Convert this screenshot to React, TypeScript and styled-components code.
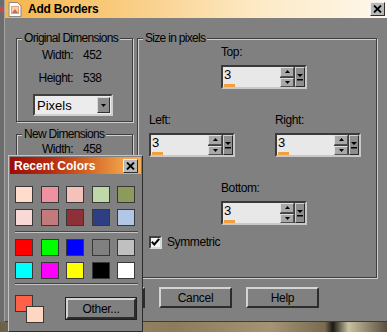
import React from "react";
import styled, { createGlobalStyle } from "styled-components";

const GlobalStyle = createGlobalStyle`
  html, body {
    margin: 0;
    padding: 0;
    overflow: hidden;
    background: #5e5e5e;
  }
  body {
    font-family: "Liberation Sans", Arial, sans-serif;
    font-size: 12px;
    color: #000;
  }
`;

const Screen = styled.div`
  position: relative;
  width: 387px;
  height: 332px;
  display: flex;
  flex-direction: column;
  overflow: hidden;
`;

const Main = styled.div`
  display: flex;
  height: 322px;
`;

const EdgeStrip = styled.div`
  width: 4px;
  background: linear-gradient(
    to bottom,
    #6c6c6c 0 7px,
    #d04848 7px 12px,
    #6c6c6c 12px 100%
  );
`;

const PhotoStrip = styled.div`
  flex: 1;
  background: linear-gradient(
    to right,
    #6a604a 0,
    #9a8a68 20%,
    #8c7c5c 45%,
    #a49474 70%,
    #7a6a50 84%,
    #1a1a14 86%,
    #c8c0a0 90%,
    #5a5040 100%
  );
`;

const Dialog = styled.div`
  flex: 1;
  display: flex;
  flex-direction: column;
  background: #808080;
  border-left: 1px solid #a4a4a4;
  border-bottom: 1px solid #3c3c3c;
`;

const TitleBar = styled.div`
  height: 18px;
  display: flex;
  align-items: center;
  padding: 0 2px 0 3px;
  background: linear-gradient(
    to right,
    #f5b54c 0,
    #f9cf88 35%,
    #fde9c4 65%,
    #fff8ec 100%
  );
`;

const TitleText = styled.div`
  flex: 1;
  margin-left: 6px;
  font-weight: bold;
  font-size: 12px;
  letter-spacing: -0.2px;
`;

const CloseButton = styled.div`
  width: 15px;
  height: 14px;
  box-sizing: border-box;
  display: flex;
  align-items: center;
  justify-content: center;
  background: #b8b8b8;
  border: 1px solid;
  border-color: #f0f0f0 #303030 #303030 #f0f0f0;
`;

const Body = styled.div`
  flex: 1;
  display: flex;
  flex-direction: column;
  padding: 13px 10px 0 11px;
`;

const Groups = styled.div`
  display: flex;
  gap: 4px;
  height: 247px;
`;

const LeftColumn = styled.div`
  width: 117px;
  display: flex;
  flex-direction: column;
  gap: 5px;
`;

const Group = styled.fieldset<{ $height?: number; $grow?: boolean }>`
  margin: 0;
  padding: 0;
  min-width: 0;
  box-sizing: border-box;
  ${(p) => (p.$height ? `height: ${p.$height}px;` : "")}
  ${(p) => (p.$grow ? "flex: 1;" : "")}
  border: 1px solid #3e3e3e;
  box-shadow: inset 1px 1px 0 #cfcfcf, 1px 1px 0 #cfcfcf;
  display: flex;
  flex-direction: column;
`;

const Legend = styled.legend`
  margin-left: 5px;
  padding: 0 2px;
  background: #808080;
  line-height: 14px;
  letter-spacing: -0.7px;
`;

const InfoGrid = styled.div<{ $top?: number }>`
  display: grid;
  grid-template-columns: 56px auto;
  column-gap: 10px;
  row-gap: 9px;
  padding-top: ${(p) => p.$top ?? 3}px;
  line-height: 14px;
  letter-spacing: -0.5px;
`;

const InfoLabel = styled.span`
  text-align: right;
`;

const Select = styled.div`
  margin: 9px 0 0 16px;
  width: 80px;
  height: 22px;
  box-sizing: border-box;
  display: flex;
  align-items: center;
  background: #ececec;
  border: 2px solid;
  border-color: #404040 #d0d0d0 #d0d0d0 #404040;
  padding-left: 2px;
  font-size: 13px;
`;

const SelectText = styled.span`
  flex: 1;
`;

const DropButton = styled.div`
  width: 13px;
  height: 16px;
  margin-right: 1px;
  box-sizing: border-box;
  display: flex;
  align-items: center;
  justify-content: center;
  background: #8c8c8c;
  border: 1px solid;
  border-color: #d8d8d8 #303030 #303030 #d8d8d8;
`;

const SizeBody = styled.div`
  display: flex;
  flex-direction: column;
  padding: 0 15px 0 11px;
`;

const SpinRow = styled.div<{ $indent?: number; $top?: number }>`
  display: flex;
  justify-content: space-between;
  padding-left: ${(p) => p.$indent ?? 0}px;
  margin-top: ${(p) => p.$top ?? 0}px;
`;

const Field = styled.div`
  display: flex;
  flex-direction: column;
  gap: 6px;
`;

const FieldLabel = styled.span`
  line-height: 14px;
  font-size: 12px;
  letter-spacing: -0.4px;
`;

const SpinBox = styled.div`
  width: 86px;
  height: 24px;
  box-sizing: border-box;
  display: flex;
  border: 2px solid;
  border-color: #3a3a3a #c8c8c8 #c8c8c8 #3a3a3a;
  background: #3e3e3e;
`;

const SpinField = styled.div`
  flex: 1;
  background: #e8e8e8;
  font-size: 13px;
  line-height: 15px;
  padding-left: 1px;
`;

const Progress = styled.div`
  width: 11px;
  height: 3px;
  margin-top: 2px;
  background: #f0a040;
`;

const SpinArrows = styled.div`
  width: 14px;
  display: flex;
  flex-direction: column;
  gap: 1px;
`;

const ArrowButton = styled.div`
  flex: 1;
  box-sizing: border-box;
  display: flex;
  align-items: center;
  justify-content: center;
  background: #a8a8a8;
  border: 1px solid;
  border-color: #e0e0e0 #505050 #505050 #e0e0e0;
`;

const SpinMenu = styled.div`
  width: 10px;
  margin-left: 1px;
  box-sizing: border-box;
  display: flex;
  align-items: center;
  justify-content: center;
  background: #8e8e8e;
  border: 1px solid;
  border-color: #d0d0d0 #2a2a2a #2a2a2a #d0d0d0;
`;

const CheckRow = styled.label`
  display: flex;
  align-items: center;
  gap: 5px;
  margin-top: 10px;
  letter-spacing: -0.4px;
`;

const CheckBox = styled.div`
  width: 13px;
  height: 13px;
  box-sizing: border-box;
  display: flex;
  align-items: center;
  justify-content: center;
  background: #f4f4f4;
  border: 2px solid;
  border-color: #404040 #d8d8d8 #d8d8d8 #404040;
`;

const ButtonRow = styled.div`
  display: flex;
  gap: 14px;
  margin: 9px 0 0 56px;
`;

const Button = styled.div<{ $default?: boolean; $width?: number }>`
  width: ${(p) => p.$width ?? 73}px;
  height: 21px;
  box-sizing: border-box;
  display: flex;
  align-items: center;
  justify-content: center;
  background: #808080;
  font-size: 12px;
  letter-spacing: -0.3px;
  border: 2px solid;
  border-color: #d4d4d4 #2c2c2c #2c2c2c #d4d4d4;
  ${(p) => (p.$default ? "outline: 1px solid #202020;" : "")}
`;

/* floating Recent Colors palette */
const Popup = styled.div`
  position: absolute;
  left: 8px;
  top: 155px;
  width: 135px;
  height: 177px;
  box-sizing: border-box;
  background: #808080;
  border: 1px solid;
  border-color: #c4c4c4 #2c2c2c #2c2c2c #c4c4c4;
  padding: 1px;
  display: flex;
  flex-direction: column;
`;

const PopupTitle = styled.div`
  height: 17px;
  display: flex;
  align-items: center;
  padding: 0 3px 0 4px;
  background: linear-gradient(
    to right,
    #9c0e06 0,
    #b42a10 30%,
    #d66a26 62%,
    #f2a44c 88%,
    #f4ac56 100%
  );
  color: #fff;
  font-weight: bold;
  font-size: 12px;
`;

const PopupTitleText = styled.span`
  flex: 1;
`;

const PaletteBody = styled.div`
  display: flex;
  flex-direction: column;
  padding: 12px 0 0 5px;
`;

const SwatchGrid = styled.div<{ $top?: number }>`
  display: grid;
  grid-template-columns: repeat(5, 18px);
  column-gap: 7.5px;
  row-gap: 6px;
  margin-top: ${(p) => p.$top ?? 0}px;
`;

const Swatch = styled.div<{ $color: string }>`
  width: 18px;
  height: 17px;
  box-sizing: border-box;
  background: ${(p) => p.$color};
  border: 1px solid #383838;
`;

const Separator = styled.div<{ $top: number }>`
  width: 123px;
  margin-top: ${(p) => p.$top}px;
  border-top: 1px solid #444;
  border-bottom: 1px solid #c4c4c4;
`;

const PaletteFooter = styled.div`
  display: flex;
  align-items: flex-start;
  justify-content: space-between;
  width: 121px;
  margin-top: 10px;
`;

const ColorPair = styled.div`
  display: grid;
  grid-template-columns: 11px 7px 11px;
  grid-template-rows: 11px 6px 11px;
`;

const ColorChip = styled.div<{ $color: string; $back?: boolean }>`
  grid-column: ${(p) => (p.$back ? "2 / 4" : "1 / 3")};
  grid-row: ${(p) => (p.$back ? "2 / 4" : "1 / 3")};
  background: ${(p) => p.$color};
  border: 1px solid #383838;
  box-sizing: border-box;
  z-index: ${(p) => (p.$back ? 1 : 0)};
`;

const OtherWrap = styled.div`
  margin-top: 3px;
`;

const recent = [
  "#ffdccb", "#ee92a2", "#f6c1b8", "#bfd8a8", "#8c9a5c",
  "#f9d9d6", "#c27a7c", "#8e3038", "#2e3e82", "#b2c6e8",
];
const basic = [
  "#ff0000", "#00ff00", "#0000ff", "#808080", "#c0c0c0",
  "#00ffff", "#ff00ff", "#ffff00", "#000000", "#ffffff",
];

const XGlyph = () => (
  <svg width="9" height="8" viewBox="0 0 9 8">
    <path d="M1 0.5 L8 7.5 M8 0.5 L1 7.5" stroke="#000" strokeWidth="1.8" />
  </svg>
);

const Tri = ({ up }: { up?: boolean }) => (
  <svg width="5" height="3" viewBox="0 0 5 3">
    <path d={up ? "M2.5 0 L5 3 L0 3 Z" : "M0 0 L5 0 L2.5 3 Z"} fill="#000" />
  </svg>
);

const MenuGlyph = () => (
  <svg width="6" height="7" viewBox="0 0 6 7">
    <path d="M0 0 L6 0 L3 3 Z" fill="#000" />
    <rect x="0" y="5" width="6" height="1.5" fill="#000" />
  </svg>
);

const DocIcon = () => (
  <svg width="14" height="15" viewBox="0 0 14 15">
    <path d="M1 0.5 H9.5 L13 4 V14.5 H1 Z" fill="#fbfbf8" stroke="#8a8a8a" />
    <rect x="3" y="4" width="8" height="8" fill="#e8a080" />
    <rect x="4" y="5" width="6" height="6" fill="#f4d0b4" />
    <path d="M4 11 L7 7 L10 11 Z" fill="#c07050" />
  </svg>
);

const Spinner = ({ label }: { label: string }) => (
  <Field>
    <FieldLabel>{label}</FieldLabel>
    <SpinBox>
      <SpinField>
        3
        <Progress />
      </SpinField>
      <SpinArrows>
        <ArrowButton>
          <Tri up />
        </ArrowButton>
        <ArrowButton>
          <Tri />
        </ArrowButton>
      </SpinArrows>
      <SpinMenu>
        <MenuGlyph />
      </SpinMenu>
    </SpinBox>
  </Field>
);

const Check = () => (
  <svg width="9" height="8" viewBox="0 0 9 8">
    <path d="M0.8 3.8 L3.3 6.5 L8.2 0.8" stroke="#000" strokeWidth="2" fill="none" />
  </svg>
);

export default function App() {
  return (
    <Screen>
      <GlobalStyle />
      <Main>
        <EdgeStrip />
        <Dialog>
          <TitleBar>
            <DocIcon />
            <TitleText>Add Borders</TitleText>
            <CloseButton>
              <XGlyph />
            </CloseButton>
          </TitleBar>
          <Body>
            <Groups>
              <LeftColumn>
                <Group $height={91}>
                  <Legend>Original Dimensions</Legend>
                  <InfoGrid>
                    <InfoLabel>Width:</InfoLabel>
                    <span>452</span>
                    <InfoLabel>Height:</InfoLabel>
                    <span>538</span>
                  </InfoGrid>
                  <Select>
                    <SelectText>Pixels</SelectText>
                    <DropButton>
                      <Tri />
                    </DropButton>
                  </Select>
                </Group>
                <Group $grow>
                  <Legend>New Dimensions</Legend>
                  <InfoGrid $top={1}>
                    <InfoLabel>Width:</InfoLabel>
                    <span>458</span>
                  </InfoGrid>
                </Group>
              </LeftColumn>
              <Group $grow>
                <Legend>Size in pixels</Legend>
                <SizeBody>
                  <SpinRow $indent={72}>
                    <Spinner label="Top:" />
                  </SpinRow>
                  <SpinRow $top={24}>
                    <Spinner label="Left:" />
                    <Spinner label="Right:" />
                  </SpinRow>
                  <SpinRow $indent={72} $top={24}>
                    <Spinner label="Bottom:" />
                  </SpinRow>
                  <CheckRow>
                    <CheckBox>
                      <Check />
                    </CheckBox>
                    Symmetric
                  </CheckRow>
                </SizeBody>
              </Group>
            </Groups>
            <ButtonRow>
              {/* OK button sits under the palette window */}
              <Button />
              <Button>Cancel</Button>
              <Button>Help</Button>
            </ButtonRow>
          </Body>
        </Dialog>
      </Main>
      <PhotoStrip />

      <Popup>
        <PopupTitle>
          <PopupTitleText>Recent Colors</PopupTitleText>
          <CloseButton>
            <XGlyph />
          </CloseButton>
        </PopupTitle>
        <PaletteBody>
          <SwatchGrid>
            {recent.map((c, i) => (
              <Swatch key={i} $color={c} />
            ))}
          </SwatchGrid>
          <Separator $top={5} />
          <SwatchGrid $top={6}>
            {basic.map((c, i) => (
              <Swatch key={i} $color={c} />
            ))}
          </SwatchGrid>
          <Separator $top={4} />
          <PaletteFooter>
            <ColorPair>
              <ColorChip $color="#ff6048" />
              <ColorChip $color="#ffd6c0" $back />
            </ColorPair>
            <OtherWrap>
              <Button $default $width={70}>
                Other...
              </Button>
            </OtherWrap>
          </PaletteFooter>
        </PaletteBody>
      </Popup>
    </Screen>
  );
}
